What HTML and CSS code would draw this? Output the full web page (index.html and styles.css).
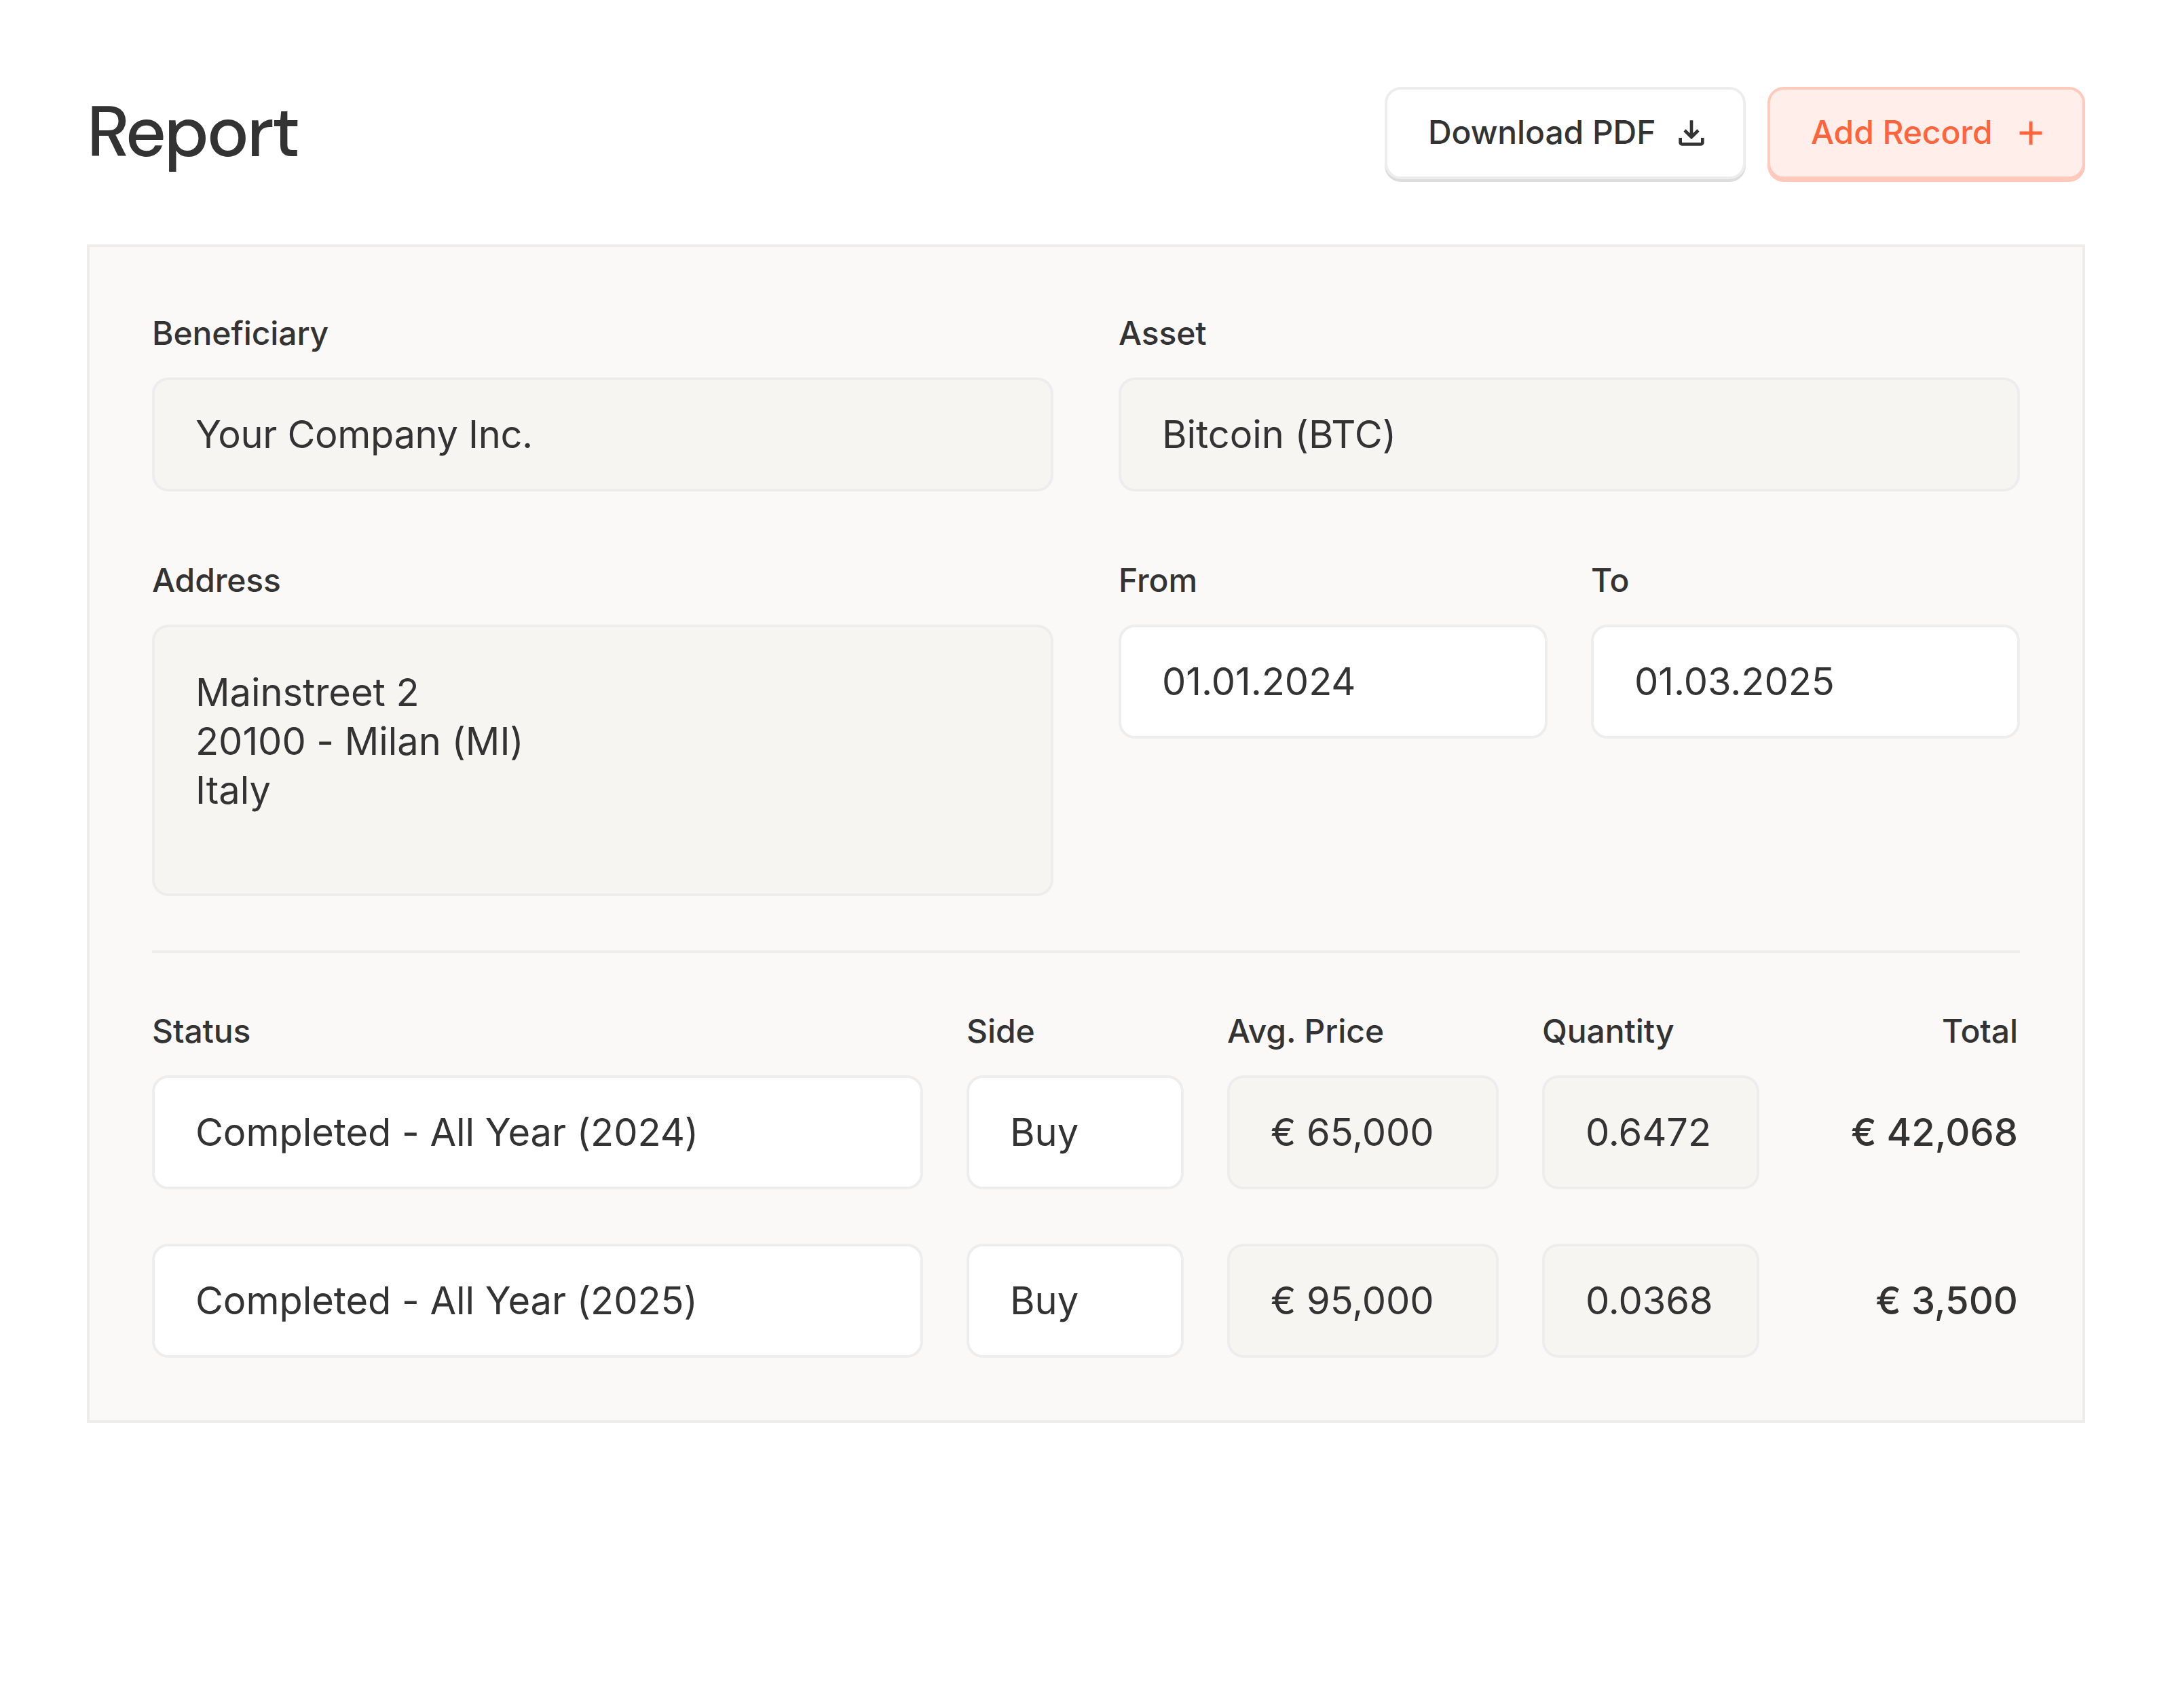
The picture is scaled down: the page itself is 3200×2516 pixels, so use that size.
FILE: index.html
```
<!DOCTYPE html>
<html lang="en">
<head>
    <meta charset="UTF-8">
    <title>Report</title>
    <link rel="stylesheet" href="styles.css">
</head>
<body>
    <header class="header">
        <h1 class="title">Report</h1>
        <div class="actions">
            <button type="button" class="button">
                <span>Download PDF</span>
                <svg class="icon" viewBox="0 0 24 24" fill="currentColor"><path d="M12 16l-5-5 1.4-1.45 2.6 2.6V4h2v8.15l2.6-2.6L17 11l-5 5zm-6 4q-.825 0-1.412-.587T4 18v-3h2v3h12v-3h2v3q0 .825-.587 1.413T18 20H6z"/></svg>
            </button>
            <button type="button" class="button button-primary">
                <span>Add Record</span>
                <svg class="icon" viewBox="0 0 56 56" fill="none" stroke="currentColor" stroke-width="5"><path d="M28 11v34M11.500 28h33"/></svg>
            </button>
        </div>
    </header>

    <main class="panel">
        <div class="details">
            <div class="field">
                <div class="label">Beneficiary</div>
                <div class="value muted tight">Your Company Inc.</div>
            </div>
            <div class="field">
                <div class="label">Asset</div>
                <div class="value muted">Bitcoin (BTC)</div>
            </div>
            <div class="field">
                <div class="label">Address</div>
                <div class="value muted address">Mainstreet 2<br>20100 - Milan (MI)<br>Italy</div>
            </div>
            <div class="dates">
                <div class="field">
                    <div class="label">From</div>
                    <div class="value">01.01.2024</div>
                </div>
                <div class="field">
                    <div class="label">To</div>
                    <div class="value">01.03.2025</div>
                </div>
            </div>
        </div>

        <hr class="divider">

        <div class="records">
            <div class="labels">
                <div class="label">Status</div>
                <div class="label">Side</div>
                <div class="label">Avg. Price</div>
                <div class="label">Quantity</div>
                <div class="label right">Total</div>
            </div>
            <div class="record">
                <div class="value">Completed - All Year (2024)</div>
                <div class="value">Buy</div>
                <div class="value muted">€ 65,000</div>
                <div class="value muted">0.6472</div>
                <div class="total right">€ 42,068</div>
            </div>
            <div class="record">
                <div class="value">Completed - All Year (2025)</div>
                <div class="value">Buy</div>
                <div class="value muted">€ 95,000</div>
                <div class="value muted">0.0368</div>
                <div class="total right">€ 3,500</div>
            </div>
        </div>
    </main>
</body>
</html>
```
FILE: styles.css
```
* {
    box-sizing: border-box;
}

body {
    margin: 0;
    padding: 128px;
    background-color: #ffffff;
    font-family: Inter, "Liberation Sans", sans-serif;
    color: #333333;
}

.header {
    display: flex;
    justify-content: space-between;
    height: 136px;
    margin-bottom: 96px;
}

.title {
    margin: 0;
    font-family: "DM Sans", Inter, sans-serif;
    font-size: 104px;
    font-weight: 500;
    line-height: 134px;
    letter-spacing: -0.03em;
}

.actions {
    display: flex;
    gap: 32px;
}

.button {
    display: flex;
    align-items: center;
    justify-content: space-between;
    width: 532px;
    height: 136px;
    padding: 0 48px 4px 60px;
    border: 4px solid #ededed;
    border-radius: 24px;
    background-color: #ffffff;
    box-shadow: 0 4px 0 #dddddd;
    font-family: inherit;
    font-size: 48px;
    font-weight: 500;
    letter-spacing: -0.1px;
    color: #333333;
    cursor: pointer;
}

.button-primary {
    width: 468px;
    border-color: #ffc9bc;
    background-color: #ffeeea;
    box-shadow: 0 4px 0 #ffc9bc;
    color: #ff643d;
}

.icon {
    width: 56px;
    height: 56px;
    margin-top: 4px;
}

.panel {
    padding: 92px;
    border: 4px solid #ededed;
    background-color: #faf9f7;
}

.details {
    display: grid;
    grid-template-columns: 1fr 1fr;
    gap: 96px;
}

.dates {
    display: grid;
    grid-template-columns: 1fr 1fr;
    gap: 64px;
}

.label {
    margin-bottom: 30px;
    font-size: 48px;
    font-weight: 500;
    line-height: 70px;
    letter-spacing: -0.1px;
}

.value {
    height: 168px;
    padding: 44px 60px;
    border: 4px solid #ededed;
    border-radius: 24px;
    background-color: #ffffff;
    font-size: 56px;
    line-height: 72px;
    letter-spacing: -0.05px;
    white-space: nowrap;
}

.muted {
    background-color: #f6f5f1;
}

.tight {
    letter-spacing: -0.35px;
}

.address {
    height: 400px;
    padding: 60px;
}

.divider {
    height: 4px;
    margin: 80px 0;
    border: none;
    background-color: #ededed;
}

.labels,
.record {
    display: grid;
    grid-template-columns: 1136px 320px 400px 320px 320px;
    gap: 64px;
}

.record + .record {
    margin-top: 80px;
}

.total {
    font-size: 56px;
    font-weight: 500;
    line-height: 168px;
    white-space: nowrap;
}

.right {
    padding-right: 3px;
    text-align: right;
}
```
